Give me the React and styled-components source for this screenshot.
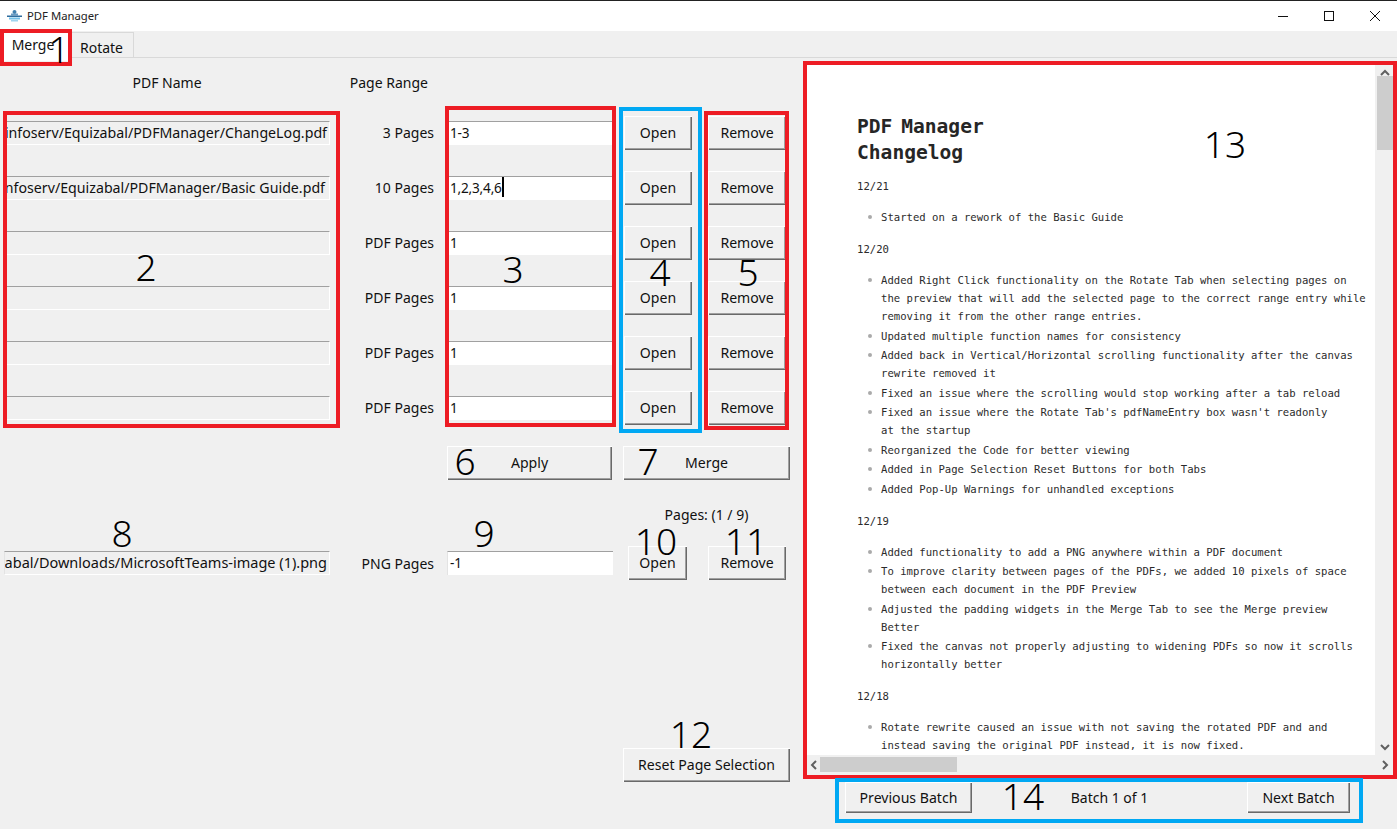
import React from "react";
import styled, { createGlobalStyle } from "styled-components";

const Global = createGlobalStyle`
  html, body { margin: 0; padding: 0; background: #f0f0f0; }
  body { font-family: "Noto Sans", "Open Sans", sans-serif; color: #111; }
  * { box-sizing: border-box; }
`;

const RED = "#ed1c24";
const BLUE = "#00a8f3";

const Window = styled.div`
  position: relative;
  width: 1397px;
  height: 829px;
  overflow: hidden;
  background: #f0f0f0;
`;

const TitleBar = styled.header`
  display: flex;
  align-items: center;
  height: 31px;
  padding-left: 7px;
  background: #fff;
  border-top: 1px solid #222;
`;

const AppName = styled.span`
  margin-left: 5px;
  padding-bottom: 1px;
  font-size: 11.3px;
  color: #222;
`;

const WindowControls = styled.div`
  display: flex;
  margin-left: auto;
  margin-right: -1px;
`;

const WindowControl = styled.div`
  display: flex;
  align-items: center;
  justify-content: center;
  width: 46px;
  height: 30px;
`;

const TabStrip = styled.nav`
  display: flex;
  align-items: flex-end;
  height: 27px;
  padding-left: 3px;
  background: #f0f0f0;
  border-bottom: 1px solid #d9d9d9;
`;

const Tab = styled.div`
  display: flex;
  align-items: center;
  justify-content: center;
  position: relative;
  font-size: 14px;
  background: ${(p) => (p.$active ? "#fff" : "#f0f0f0")};
  width: ${(p) => (p.$active ? "68px" : "63px")};
  height: ${(p) => (p.$active ? "32px" : "25px")};
  margin-bottom: ${(p) => (p.$active ? "-4px" : "0")};
  padding: ${(p) => (p.$active ? "0 8px 3px 0" : "5px 2px 0 0")};
  border: 1px solid #d9d9d9;
  border-bottom: none;
`;

const Body = styled.main`
  display: flex;
  height: 771px;
`;

const LeftPane = styled.section`
  width: 806px;
  flex: none;
  padding-left: 4px;
`;

const HeaderRow = styled.div`
  display: flex;
  align-items: center;
  height: 47px;
  padding-top: 2px;
  font-size: 14px;
`;

const NameHeading = styled.div`
  width: 326px;
  text-align: center;
`;

const RangeHeading = styled.div`
  width: 98px;
  text-align: right;
`;

const Row = styled.div`
  display: flex;
  align-items: center;
  height: ${(p) => p.$height || 55}px;
  margin-top: ${(p) => p.$top || 0}px;
`;

const NameEntry = styled.div`
  display: flex;
  justify-content: flex-end;
  width: 326px;
  height: 24px;
  padding-right: ${(p) => p.$pad || 2}px;
  overflow: hidden;
  font-size: ${(p) => p.$size || 14.2}px;
  line-height: 21px;
  white-space: nowrap;
  background: #f0f0f0;
  border-top: 1px solid #a0a0a0;
  border-left: 1px solid #e3e3e3;
  border-right: 1px solid #fff;
  border-bottom: 1px solid #fff;
`;

const PageLabel = styled.div`
  width: 105px;
  padding-right: 1px;
  font-size: 14px;
  text-align: right;
`;

const RangeEntry = styled.div`
  display: flex;
  align-items: center;
  width: 166px;
  height: 24px;
  margin-left: 12px;
  padding: 0 0 2px 2px;
  font-size: 13.6px;
  letter-spacing: -0.2px;
  background: #fff;
  border-top: 1px solid #a0a0a0;
  border-left: 1px solid #e3e3e3;
`;

const Caret = styled.span`
  display: inline-block;
  width: 2px;
  height: 20px;
  background: #000;
`;

const Button = styled.button`
  flex: none;
  width: ${(p) => p.$width}px;
  height: ${(p) => p.$height || 34}px;
  margin-left: ${(p) => p.$left || 0}px;
  padding: 0 0 1px;
  font-family: inherit;
  font-size: 14.1px;
  color: #111;
  background: #f0f0f0;
  border: none;
  border-radius: 0;
  box-shadow: inset 1px 1px 0 #fff, inset -1px -1px 0 #696969, inset -2px -2px 0 #a0a0a0;
`;

const PagesCaption = styled.div`
  width: 167px;
  margin-left: 619px;
  font-size: 14px;
  text-align: center;
`;

const RightPane = styled.aside`
  display: flex;
  flex-direction: column;
  width: 587px;
  padding-top: 5px;
`;

const Viewer = styled.div`
  display: grid;
  grid-template-columns: 569px 18px;
  grid-template-rows: 692px 20px;
  height: 712px;
`;

const Page = styled.article`
  padding: 51px 0 0 51px;
  overflow: hidden;
  font-family: "DejaVu Sans Mono", "Liberation Mono", monospace;
  font-size: 10.6px;
  line-height: 18px;
  color: #2b2b2b;
  background: #fff;
`;

const PageTitle = styled.h1`
  margin: 0 0 11px;
  font-size: 19.6px;
  line-height: 26px;
  font-weight: 700;
  word-spacing: -3px;
  color: #262626;
`;

const DateLine = styled.p`
  margin: 0;
`;

const Changes = styled.ul`
  margin: 13px 0 14px;
  padding-left: 24px;
  list-style: none;
`;

const Change = styled.li`
  position: relative;
  margin-bottom: 1.5px;
  white-space: pre-line;
  &::before {
    content: "";
    position: absolute;
    left: -13px;
    top: 7px;
    width: 4px;
    height: 4px;
    border-radius: 50%;
    background: #aaa;
  }
`;

const VScroll = styled.div`
  display: flex;
  flex-direction: column;
  align-items: flex-end;
  padding-top: 2px;
`;

const Arrow = styled.div`
  display: flex;
  align-items: center;
  justify-content: center;
  flex: none;
  width: 16px;
  height: 16px;
`;

const VThumb = styled.div`
  width: 16px;
  height: 74px;
  margin-top: -5px;
  background: #cdcdcd;
`;

const VSpacer = styled.div`
  flex: 1;
`;

const HScroll = styled.div`
  grid-column: 1 / span 2;
  display: flex;
  align-items: flex-start;
  padding-top: 2px;
`;

const HThumb = styled.div`
  width: 137px;
  height: 15px;
  margin-left: -2px;
  background: #cdcdcd;
`;

const BatchBar = styled.div`
  display: flex;
  align-items: center;
  justify-content: space-between;
  width: 544px;
  margin-top: 7px;
  padding-left: 39px;
  font-size: 14px;
`;

const Marker = styled.div`
  position: absolute;
  left: ${(p) => p.$x}px;
  top: ${(p) => p.$y}px;
  width: ${(p) => p.$w}px;
  height: ${(p) => p.$h}px;
  border: 4px solid ${(p) => p.$color};
  pointer-events: none;
`;

const Callout = styled.div`
  position: absolute;
  left: ${(p) => p.$x}px;
  top: ${(p) => p.$y}px;
  transform: translate(-50%, -54%);
  font-size: 37px;
  line-height: 1;
  font-weight: 300;
  color: #000;
`;

const Chevron = ({ d }) => (
  <svg width="10" height="10" viewBox="0 0 10 10">
    <path d={d} fill="none" stroke="#606060" strokeWidth="2" />
  </svg>
);

const AppIcon = () => (
  <svg width="15" height="12" viewBox="0 0 15 12">
    <rect x="5.5" y="0" width="4" height="4" rx="2" fill="#3f7fae" />
    <rect x="4" y="3.5" width="7" height="2" fill="#6a9cc4" />
    <rect x="0" y="5.5" width="15" height="1.5" fill="#2f6d9e" />
    <rect x="2" y="7.5" width="11" height="2" fill="#74c0e8" />
    <rect x="4" y="10" width="7" height="1.5" fill="#9ed4ef" />
  </svg>
);

const rows = [
  { name: "infoserv/Equizabal/PDFManager/ChangeLog.pdf", label: "3 Pages", range: "1-3" },
  { name: "nfoserv/Equizabal/PDFManager/Basic Guide.pdf", label: "10 Pages", range: "1,2,3,4,6", caret: true, pad: 4 },
  { name: "", label: "PDF Pages", range: "1" },
  { name: "", label: "PDF Pages", range: "1" },
  { name: "", label: "PDF Pages", range: "1" },
  { name: "", label: "PDF Pages", range: "1" },
];

const changelog = [
  { date: "12/21", items: ["Started on a rework of the Basic Guide"] },
  {
    date: "12/20",
    items: [
      "Added Right Click functionality on the Rotate Tab when selecting pages on\nthe preview that will add the selected page to the correct range entry while\nremoving it from the other range entries.",
      "Updated multiple function names for consistency",
      "Added back in Vertical/Horizontal scrolling functionality after the canvas\nrewrite removed it",
      "Fixed an issue where the scrolling would stop working after a tab reload",
      "Fixed an issue where the Rotate Tab's pdfNameEntry box wasn't readonly\nat the startup",
      "Reorganized the Code for better viewing",
      "Added in Page Selection Reset Buttons for both Tabs",
      "Added Pop-Up Warnings for unhandled exceptions",
    ],
  },
  {
    date: "12/19",
    items: [
      "Added functionality to add a PNG anywhere within a PDF document",
      "To improve clarity between pages of the PDFs, we added 10 pixels of space\nbetween each document in the PDF Preview",
      "Adjusted the padding widgets in the Merge Tab to see the Merge preview\nBetter",
      "Fixed the canvas not properly adjusting to widening PDFs so now it scrolls\nhorizontally better",
    ],
  },
  {
    date: "12/18",
    items: [
      "Rotate rewrite caused an issue with not saving the rotated PDF and and\ninstead saving the original PDF instead, it is now fixed.",
    ],
  },
];

const markers = [
  { x: 0, y: 29, w: 72, h: 37, color: RED },
  { x: 3, y: 111, w: 337, h: 317, color: RED },
  { x: 445, y: 106, w: 171, h: 321, color: RED },
  { x: 619, y: 107, w: 83, h: 326, color: BLUE },
  { x: 704, y: 111, w: 85, h: 319, color: RED },
  { x: 803, y: 61, w: 594, h: 718, color: RED },
  { x: 835, y: 778, w: 528, h: 45, color: BLUE },
];

const callouts = [
  { n: 1, x: 59, y: 50 },
  { n: 2, x: 146, y: 268 },
  { n: 3, x: 513, y: 270 },
  { n: 4, x: 660, y: 273 },
  { n: 5, x: 748, y: 273 },
  { n: 6, x: 465, y: 462 },
  { n: 7, x: 648, y: 462 },
  { n: 8, x: 122, y: 534 },
  { n: 9, x: 484, y: 534 },
  { n: 10, x: 656, y: 542 },
  { n: 11, x: 746, y: 542 },
  { n: 12, x: 691, y: 735 },
  { n: 13, x: 1225, y: 145 },
  { n: 14, x: 1023, y: 797 },
];

const App = () => (
  <Window>
    <Global />
    <TitleBar>
      <AppIcon />
      <AppName>PDF Manager</AppName>
      <WindowControls>
        <WindowControl>
          <svg width="10" height="10" viewBox="0 0 10 10">
            <path d="M0 5.5H10" stroke="#111" fill="none" />
          </svg>
        </WindowControl>
        <WindowControl>
          <svg width="10" height="10" viewBox="0 0 10 10">
            <rect x="0.5" y="0.5" width="9" height="9" stroke="#111" fill="none" />
          </svg>
        </WindowControl>
        <WindowControl>
          <svg width="10" height="10" viewBox="0 0 10 10">
            <path d="M0 0L10 10M10 0L0 10" stroke="#111" fill="none" />
          </svg>
        </WindowControl>
      </WindowControls>
    </TitleBar>
    <TabStrip>
      <Tab $active>Merge</Tab>
      <Tab>Rotate</Tab>
    </TabStrip>
    <Body>
      <LeftPane>
        <HeaderRow>
          <NameHeading>PDF Name</NameHeading>
          <RangeHeading>Page Range</RangeHeading>
        </HeaderRow>
        {rows.map((row, i) => (
          <Row key={i}>
            <NameEntry $pad={row.pad}>{row.name}</NameEntry>
            <PageLabel>{row.label}</PageLabel>
            <RangeEntry>
              {row.range}
              {row.caret && <Caret />}
            </RangeEntry>
            <Button $width={68} $left={11}>Open</Button>
            <Button $width={78} $left={16}>Remove</Button>
          </Row>
        ))}
        <Row>
          <Button $width={165} $left={443}>Apply</Button>
          <Button $width={167} $left={11}>Merge</Button>
        </Row>
        <Row $height={48}>
          <PagesCaption>Pages: (1 / 9)</PagesCaption>
        </Row>
        <Row $height={50}>
          <NameEntry $size={14.5}>abal/Downloads/MicrosoftTeams-image (1).png</NameEntry>
          <PageLabel>PNG Pages</PageLabel>
          <RangeEntry>-1</RangeEntry>
          <Button $width={59} $left={15}>Open</Button>
          <Button $width={78} $left={21}>Remove</Button>
        </Row>
        <Row $top={160} $height={34}>
          <Button $width={167} $left={619}>Reset Page Selection</Button>
        </Row>
      </LeftPane>
      <RightPane>
        <Viewer>
          <Page>
            <PageTitle>
              PDF Manager
              <br />
              Changelog
            </PageTitle>
            {changelog.map((group) => (
              <React.Fragment key={group.date}>
                <DateLine>{group.date}</DateLine>
                <Changes>
                  {group.items.map((item) => (
                    <Change key={item}>{item}</Change>
                  ))}
                </Changes>
              </React.Fragment>
            ))}
          </Page>
          <VScroll>
            <Arrow>
              <Chevron d="M1 7L5 3L9 7" />
            </Arrow>
            <VThumb />
            <VSpacer />
            <Arrow>
              <Chevron d="M1 3L5 7L9 3" />
            </Arrow>
          </VScroll>
          <HScroll>
            <Arrow>
              <Chevron d="M7 1L3 5L7 9" />
            </Arrow>
            <HThumb />
            <VSpacer />
            <Arrow>
              <Chevron d="M3 1L7 5L3 9" />
            </Arrow>
          </HScroll>
        </Viewer>
        <BatchBar>
          <Button $width={127} $height={31}>Previous Batch</Button>
          <span>Batch 1 of 1</span>
          <Button $width={103} $height={31}>Next Batch</Button>
        </BatchBar>
      </RightPane>
    </Body>
    {markers.map((m, i) => (
      <Marker key={i} $x={m.x} $y={m.y} $w={m.w} $h={m.h} $color={m.color} />
    ))}
    {callouts.map((c) => (
      <Callout key={c.n} $x={c.x} $y={c.y}>{c.n}</Callout>
    ))}
  </Window>
);

export default App;
